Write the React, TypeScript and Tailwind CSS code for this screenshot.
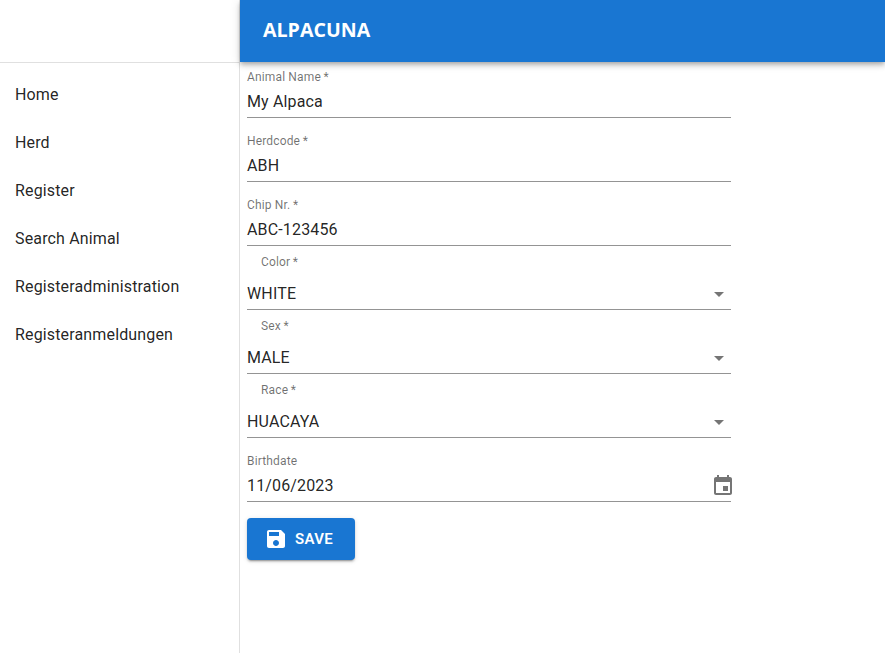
const NAV_ITEMS = ['Home', 'Herd', 'Register', 'Search Animal', 'Registeradministration', 'Registeranmeldungen']

const FIELDS = [
  { label: 'Animal Name\u2009*', value: 'My Alpaca', kind: 'text' },
  { label: 'Herdcode\u2009*', value: 'ABH', kind: 'text' },
  { label: 'Chip Nr.\u2009*', value: 'ABC-123456', kind: 'text' },
  { label: 'Color\u2009*', value: 'WHITE', kind: 'select' },
  { label: 'Sex\u2009*', value: 'MALE', kind: 'select' },
  { label: 'Race\u2009*', value: 'HUACAYA', kind: 'select' },
  { label: 'Birthdate', value: '11/06/2023', kind: 'date' },
]

function CalendarIcon() {
  return (
    <svg className="h-6 w-6 fill-[#0000008a]" viewBox="0 0 24 24" aria-hidden="true">
      <path d="M17 12h-5v5h5v-5zM16 1v2H8V1H6v2H5c-1.11 0-1.99.9-1.99 2L3 19c0 1.1.89 2 2 2h14c1.1 0 2-.9 2-2V5c0-1.1-.9-2-2-2h-1V1h-2zm3 18H5V8h14v11z" />
    </svg>
  )
}

function SaveIcon() {
  return (
    <svg className="h-6 w-6 fill-white" viewBox="0 0 24 24" aria-hidden="true">
      <path d="M17 3H5c-1.11 0-2 .9-2 2v14c0 1.1.89 2 2 2h14c1.1 0 2-.9 2-2V7l-4-4zm-5 16c-1.66 0-3-1.34-3-3s1.34-3 3-3 3 1.34 3 3-1.34 3-3 3zm3-10H5V5h10v4z" />
    </svg>
  )
}

function Field({ label, value, kind }: { label: string; value: string; kind: string }) {
  return (
    <div className="relative h-12 border-b border-[#949494]">
      <span
        className={`absolute text-xs leading-[13px] tracking-[0.15px] text-[#0000008f] ${
          kind === 'select' ? 'left-[14px] -top-[6px]' : 'left-0 top-px'
        }`}
      >
        {label}
      </span>
      <div className="flex h-full items-end justify-between pb-[3px] text-base leading-6 tracking-[0.15px] text-[#000000de]">
        <span>{value}</span>
        {kind === 'select' && (
          <span className="flex h-6 w-6 items-center justify-center">
            <span className="h-0 w-0 border-x-[5px] border-t-[5px] border-x-transparent border-t-[#0000008a]" />
          </span>
        )}
        {kind === 'date' && (
          <span className="mr-[-4px]">
            <CalendarIcon />
          </span>
        )}
      </div>
    </div>
  )
}

export default function App() {
  return (
    <div className="flex h-[653px] w-[885px] overflow-hidden bg-white font-['Roboto',sans-serif] text-[#000000de]">
      <aside className="w-60 shrink-0 border-r border-[#e0e0e0]">
        <div className="h-[63px] border-b border-[#e0e0e0]" />
        <nav className="pt-2">
          {NAV_ITEMS.map((item) => (
            <div key={item} className="flex h-12 items-center px-[15px] text-base tracking-[0.15px]">
              {item}
            </div>
          ))}
        </nav>
      </aside>
      <div className="flex min-w-0 flex-1 flex-col">
        <header className="relative z-10 flex h-[62px] shrink-0 items-center bg-[#1976d2] px-[23px] pb-[2px] shadow-[0_2px_4px_-1px_#0003,0_4px_5px_0_#00000024,0_1px_10px_0_#0000001f]">
          <h1 className="font-['Open_Sans',sans-serif] text-[19.6px] font-bold text-white">ALPACUNA</h1>
        </header>
        <form className="ml-[7px] flex w-[484px] flex-col gap-4 pt-2">
          {FIELDS.map((field) => (
            <Field key={field.label} {...field} />
          ))}
          <button
            type="button"
            className="flex h-[42px] w-[108px] items-center justify-start gap-[7px] rounded bg-[#1976d2] pl-[17px] text-[15px] font-semibold tracking-[0.3px] text-white shadow-[0_3px_1px_-2px_#0003,0_2px_2px_0_#00000024,0_1px_5px_0_#0000001f]"
          >
            <SaveIcon />
            SAVE
          </button>
        </form>
      </div>
    </div>
  )
}
